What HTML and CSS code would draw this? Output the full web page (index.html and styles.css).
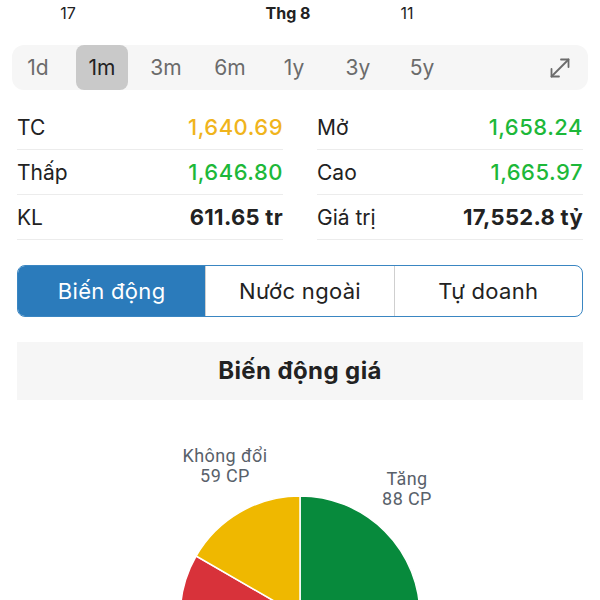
FILE: index.html
```html
<!DOCTYPE html>
<html lang="vi">
<head>
    <meta charset="UTF-8">
    <meta name="viewport" content="width=device-width, initial-scale=1.0">
    <title>Chỉ số – Biến động</title>
    <link rel="stylesheet" href="styles.css">
</head>
<body>

    <div class="axis">
        <span class="tick tick-17">17</span>
        <span class="tick tick-month">Thg 8</span>
        <span class="tick tick-11">11</span>
    </div>

    <div class="range-bar">
        <div class="ranges">
            <span class="range">1d</span>
            <span class="range active">1m</span>
            <span class="range">3m</span>
            <span class="range">6m</span>
            <span class="range">1y</span>
            <span class="range">3y</span>
            <span class="range">5y</span>
        </div>
        <svg class="expand" width="24" height="24" viewBox="0 0 24 24" fill="none" stroke="#6b6b6b" stroke-width="1.8" stroke-linecap="round" stroke-linejoin="round">
            <path d="M3.5 20.5 L20.5 3.5"/>
            <path d="M13 3.5 L20.5 3.5 L20.5 11"/>
            <path d="M3.5 13 L3.5 20.5 L11 20.5"/>
        </svg>
    </div>

    <div class="stats">
        <div class="stat"><span class="label">TC</span><span class="value ref">1,640.69</span></div>
        <div class="stat"><span class="label">Mở</span><span class="value up">1,658.24</span></div>
        <div class="stat"><span class="label">Thấp</span><span class="value up">1,646.80</span></div>
        <div class="stat"><span class="label">Cao</span><span class="value up">1,665.97</span></div>
        <div class="stat"><span class="label">KL</span><span class="value bold">611.65 tr</span></div>
        <div class="stat"><span class="label">Giá trị</span><span class="value bold">17,552.8 tỷ</span></div>
    </div>

    <div class="tabs">
        <div class="tab active">Biến động</div>
        <div class="tab">Nước ngoài</div>
        <div class="tab">Tự doanh</div>
    </div>

    <div class="section-title">Biến động giá</div>

    <!-- biểu đồ tròn -->
    <svg class="pie" width="600" height="220" viewBox="0 0 600 220">
        <path d="M300 216 L300 96 A120 120 0 0 1 420 216 Z" fill="#078a3c" stroke="#fff" stroke-width="1.5"/>
        <path d="M300 216 L420 216 A120 120 0 1 1 196.1 156 Z" fill="#d8323a" stroke="#fff" stroke-width="1.5"/>
        <path d="M300 216 L196.1 156 A120 120 0 0 1 300 96 Z" fill="#efb800" stroke="#fff" stroke-width="1.5"/>
        <text class="pie-label" x="225" y="62">Không đổi</text>
        <text class="pie-label" x="225" y="82">59 CP</text>
        <text class="pie-label" x="407" y="85">Tăng</text>
        <text class="pie-label" x="407" y="105">88 CP</text>
    </svg>

</body>
</html>
```

FILE: styles.css
```css
body {
    font-family: Inter, "Noto Sans", sans-serif;
    background-color: white;
    color: #222;
    margin: 0;
    padding: 0;
    overflow: hidden;
}
.axis {
    display: flex;
    height: 26px;
    line-height: 26px;
    font-size: 16px;
    color: #222;
}
.tick {
    text-align: center;
}
.tick-17 {
    width: 40px;
    margin-left: 48px;
}
.tick-month {
    width: 60px;
    margin-left: 170px;
    font-weight: bold;
}
.tick-11 {
    width: 40px;
    margin-left: 69px;
}
.range-bar {
    display: flex;
    align-items: center;
    justify-content: space-between;
    margin: 19px 12px 0;
    height: 45px;
    background: #f6f6f6;
    border-radius: 12px;
    padding-right: 16px;
}
.ranges {
    display: flex;
    gap: 12px;
    height: 100%;
}
.range {
    width: 52px;
    display: flex;
    align-items: center;
    justify-content: center;
    font-size: 21px;
    color: #6b6b6b;
    border-radius: 8px;
}
.range.active {
    background: #c9c9c9;
    color: #222;
}
.stats {
    display: grid;
    grid-template-columns: 1fr 1fr;
    column-gap: 34px;
    margin: 15px 17px 0;
}
.stat {
    display: flex;
    justify-content: space-between;
    align-items: center;
    height: 44px;
    border-bottom: 1px solid #ececec;
    font-size: 21px;
}
.value {
    font-size: 22px;
    font-weight: 500;
    letter-spacing: 0.5px;
}
.value.ref {
    color: #f0b41c;
}
.value.up {
    color: #1db839;
}
.value.bold {
    font-weight: bold;
    color: #222;
    letter-spacing: 0.3px;
}
.tabs {
    display: flex;
    margin: 25px 17px 0;
    height: 50px;
    border: 1.5px solid #3a86c2;
    border-radius: 8px;
    overflow: hidden;
}
.tab {
    flex: 1;
    display: flex;
    align-items: center;
    justify-content: center;
    font-size: 22px;
    letter-spacing: 0.3px;
    color: #222;
    border-left: 1px solid #cfcfcf;
}
.tab:first-child {
    border-left: none;
}
.tab.active {
    background: #2b7bbb;
    color: white;
}
.section-title {
    margin: 25px 17px 0;
    height: 58px;
    line-height: 58px;
    background: #f6f6f6;
    text-align: center;
    font-size: 24px;
    letter-spacing: 0.4px;
    font-weight: bold;
}
.pie {
    display: block;
}
.pie-label {
    font-family: Roboto, sans-serif;
    font-size: 18px;
    letter-spacing: 0.4px;
    fill: #59616a;
    text-anchor: middle;
}
```
